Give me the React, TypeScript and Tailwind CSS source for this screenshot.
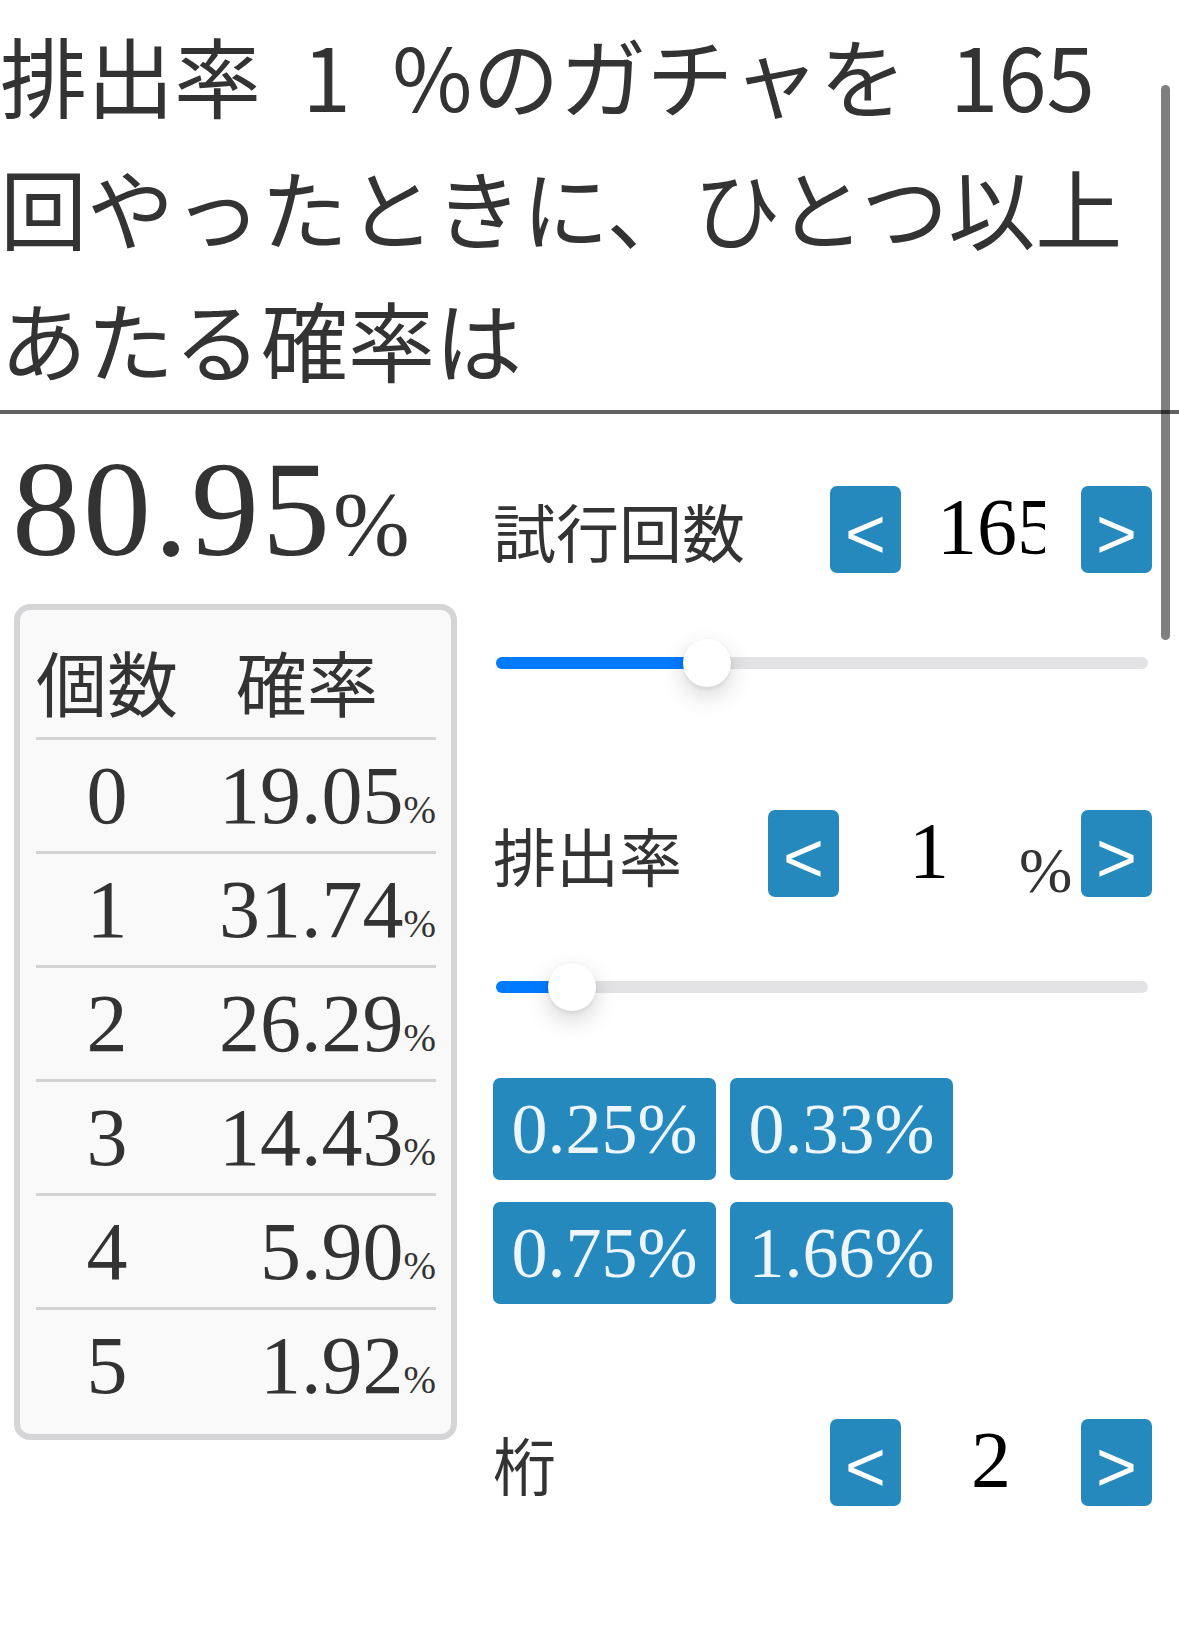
import React from "react";

const CJK = "font-['Noto_Sans_CJK_JP',sans-serif]";
const SERIF = "font-['Liberation_Serif','Noto_Sans_CJK_JP',serif]";

function Btn({ children }: { children: React.ReactNode }) {
  return (
    <div className="w-[71px] h-[87px] shrink-0 rounded-[7px] bg-[#2589bd] flex items-center justify-center pt-[8px] text-white text-[70px] leading-none font-['Liberation_Sans',sans-serif]">
      {children}
    </div>
  );
}

function Value({ children }: { children: React.ReactNode }) {
  return (
    <div className="w-[180px] shrink-0 px-[36px] pb-[6px]">
      <div
        className={`w-[108px] overflow-x-clip flex justify-center-safe text-black text-[80px] leading-[80px] ${SERIF}`}
      >
        <span className="shrink-0 whitespace-nowrap">{children}</span>
      </div>
    </div>
  );
}

function Stepper({
  label,
  value,
  unit,
}: {
  label: string;
  value: string;
  unit?: boolean;
}) {
  return (
    <div className="flex items-center h-[87px]">
      <div className={`flex-1 text-[63px] leading-none whitespace-nowrap ${CJK}`}>{label}</div>
      <Btn>&lt;</Btn>
      <Value>{value}</Value>
      {unit && (
        <div
          className={`w-[62px] shrink-0 self-end -mb-[6px] text-[64px] leading-none text-[#333] ${SERIF}`}
        >
          %
        </div>
      )}
      <Btn>&gt;</Btn>
    </div>
  );
}

function Slider({ pos }: { pos: number }) {
  return (
    <div className="relative ml-[3px] mr-[4px] h-[48px] flex items-center">
      <div className="h-[12px] w-full rounded-full bg-[#e3e3e6] overflow-hidden">
        <div className="h-full bg-[#007aff]" style={{ width: pos }} />
      </div>
      <div
        className="absolute top-0 w-[48px] h-[48px] rounded-full bg-white shadow-[0_9px_24px_rgba(0,0,0,0.16),0_2px_4px_rgba(0,0,0,0.08)]"
        style={{ left: pos - 24 }}
      />
    </div>
  );
}

export default function App() {
  const rows: [string, string][] = [
    ["0", "19.05"],
    ["1", "31.74"],
    ["2", "26.29"],
    ["3", "14.43"],
    ["4", "5.90"],
    ["5", "1.92"],
  ];
  const presets = ["0.25%", "0.33%", "0.75%", "1.66%"];

  return (
    <div className="relative w-[1179px] min-h-[1645px] bg-white text-[#333] overflow-hidden">
      <h1
        className={`pt-[8px] pr-[27px] text-[87px] leading-[132px] font-normal ${CJK}`}
      >
        排出率 <span className="mx-[22px]">1</span> %のガチャを <span className="ml-[24px] mr-[30px]">165</span> 回やったときに、ひとつ以上あたる確率は
      </h1>
      <div className="mt-[6px] h-[4px] bg-[#616161]" />

      <div className="flex">
        {/* left column */}
        <div className="w-[493px] shrink-0">
          <div className={`mt-[27px] pl-[12px] text-[136px] leading-[136px] tracking-[3px] whitespace-nowrap ${SERIF}`}>
            80.95<span className="text-[92px] tracking-normal">%</span>
          </div>
          <div className="mt-[12px] ml-[14px] w-[443px] rounded-[16px] border-[6px] border-[#d5d5d7] bg-[#f9f9f9] pl-[16px] pr-[15px] py-[13px]">
            <div className={`grid grid-cols-[142px_1fr] h-[114px] text-[71px] leading-[114px] ${CJK}`}>
              <div className="text-center">個数</div>
              <div className="text-center">確率</div>
            </div>
            {rows.map(([n, v]) => (
              <div
                key={n}
                className={`grid grid-cols-[142px_1fr] h-[114px] border-t-[3px] border-[#d3d3d3] text-[82px] leading-[111px] whitespace-nowrap ${SERIF}`}
              >
                <div className="text-center">{n}</div>
                <div className="text-right">
                  {v}
                  <span className="text-[39px]">%</span>
                </div>
              </div>
            ))}
          </div>
        </div>

        {/* right column */}
        <div className="flex-1 pr-[27px]">
          <div className="mt-[72px]">
            <Stepper label="試行回数" value="165" />
          </div>
          <div className="mt-[66px]">
            <Slider pos={211} />
          </div>
          <div className="mt-[123px]">
            <Stepper label="排出率" value="1" unit />
          </div>
          <div className="mt-[66px]">
            <Slider pos={76} />
          </div>
          <div className="mt-[67px] flex flex-wrap gap-x-[14px] gap-y-[22px]">
            {presets.map((p) => (
              <div
                key={p}
                className={`w-[223px] h-[102px] rounded-[7px] bg-[#2589bd] flex items-center justify-center text-[#eef6fb] text-[72px] leading-none ${SERIF}`}
              >
                {p}
              </div>
            ))}
          </div>
          <div className="mt-[115px]">
            <Stepper label="桁" value="2" />
          </div>
        </div>
      </div>

      {/* overlay scrollbar */}
      <div className="absolute left-[1161px] top-[85px] w-[9px] h-[555px] rounded-full bg-black/50" />
    </div>
  );
}
